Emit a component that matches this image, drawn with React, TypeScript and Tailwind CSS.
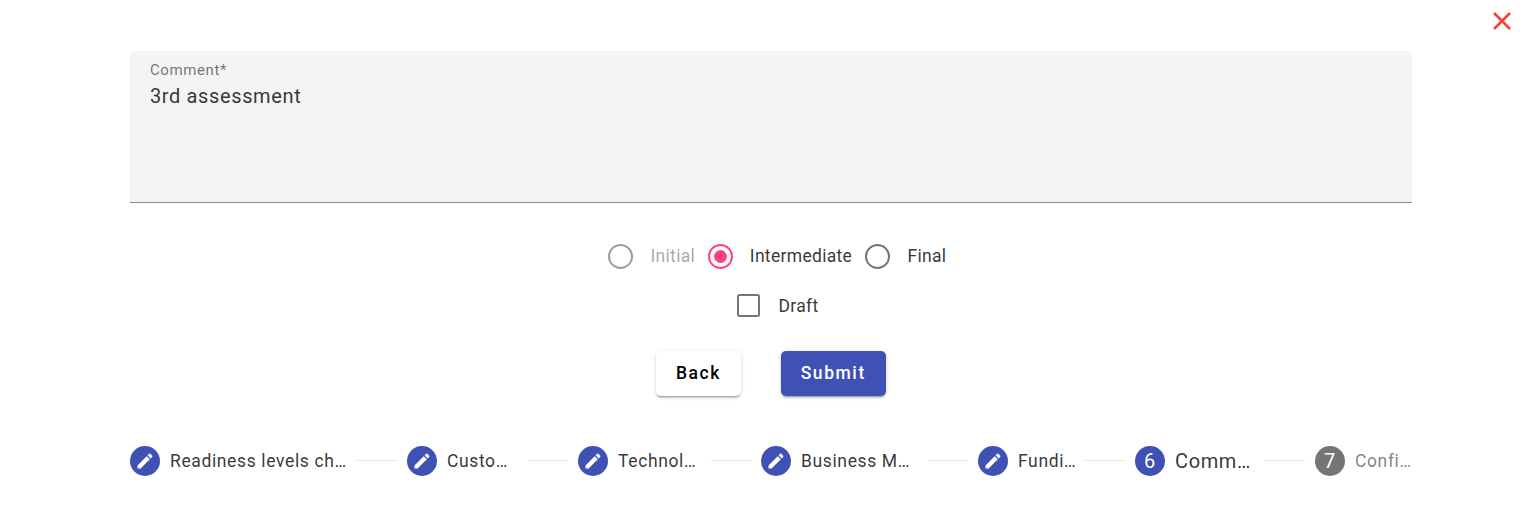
import { ReactNode } from "react";

type Step = { label: string; width: string; state: "done" | "active" | "idle" };

const steps: Step[] = [
  { label: "Readiness levels ch…", width: "w-[217px]", state: "done" },
  { label: "Custo…", width: "w-[111px]", state: "done" },
  { label: "Technol…", width: "w-[123px]", state: "done" },
  { label: "Business M…", width: "w-[157px]", state: "done" },
  { label: "Fundi…", width: "w-[97px]", state: "done" },
  { label: "Comm…", width: "w-[120px]", state: "active" },
  { label: "Confi…", width: "w-[97px]", state: "idle" },
];

const labelStyles = {
  done: "text-[17.5px] tracking-[0.625px] text-black/80",
  active: "text-[20px] tracking-[0.625px] text-black/80",
  idle: "text-[17.5px] tracking-[0.625px] text-black/50",
};

function Pencil() {
  return (
    <svg viewBox="0 0 24 24" className="size-5" fill="currentColor">
      <path d="M3 17.25V21h3.75L17.81 9.94l-3.75-3.75L3 17.25zM20.71 7.04c.39-.39.39-1.02 0-1.41l-2.34-2.34c-.39-.39-1.02-.39-1.41 0l-1.83 1.83 3.75 3.75 1.83-1.83z" />
    </svg>
  );
}

function Radio({ children, checked, disabled }: { children: ReactNode; checked?: boolean; disabled?: boolean }) {
  const color = checked ? "border-[#ff4081]" : disabled ? "border-[#9e9e9e]" : "border-[#757575]";
  return (
    <label className="flex items-center">
      <span className={`flex size-[25px] items-center justify-center rounded-full border-[2px] ${color}`}>
        {checked && <span className="size-[13px] rounded-full bg-[#ff4081]" />}
      </span>
      <span className={`${checked ? "ml-[17px]" : "ml-[17.5px]"} ${disabled ? "text-black/36" : "text-black/80"}`}>{children}</span>
    </label>
  );
}

export default function App() {
  return (
    <div className="h-[528px] w-full bg-white font-['Roboto',sans-serif] text-[17.5px] leading-[25px]">
      <div className="flex h-[51px] justify-end pt-[11px] pr-4">
        <button className="size-5 text-[#f44336]" aria-label="Close">
          <svg viewBox="0 0 20 20" className="size-5" fill="none" stroke="currentColor" strokeWidth="2.6">
            <path d="M2 2L18 18M18 2L2 18" />
          </svg>
        </button>
      </div>
      <main className="ml-[130px] w-[1282px]">
        <div className="h-[152px] rounded-t-[5px] border-b border-[#8c8c8c] bg-[#f4f4f4] px-5 pt-[10px]">
          <div className="h-[20px] text-[15px] leading-[18px] tracking-[0.59px] text-black/55">Comment*</div>
          <div className="text-[20px] leading-[30px] tracking-[0.625px] text-black/80">3rd assessment</div>
        </div>
        <div className="mt-[41px] ml-[478px] flex h-[25px] items-center gap-[12.7px] tracking-[0.3125px]">
          <Radio disabled>Initial</Radio>
          <Radio checked>Intermediate</Radio>
          <Radio>Final</Radio>
        </div>
        <label className="mt-[24px] ml-[607px] flex h-[25px] items-start tracking-[0.3125px] text-black/80">
          <span className="mt-px size-[23px] rounded-[2.5px] border-[2px] border-[#757575]" />
          <span className="ml-[18.5px] pt-px">Draft</span>
        </label>
        <div className="mt-[33px] ml-[526px] flex gap-10 font-medium tracking-[1.5625px]">
          <button className="h-[45px] w-[85px] rounded-[5px] bg-white text-black shadow-[0_3px_1px_-2px_rgba(0,0,0,0.2),0_2px_2px_0_rgba(0,0,0,0.14),0_1px_5px_0_rgba(0,0,0,0.12)]">Back</button>
          <button className="h-[45px] w-[105px] rounded-[5px] bg-[#3f51b5] pr-[0.5px] text-white shadow-[0_3px_1px_-2px_rgba(0,0,0,0.2),0_2px_2px_0_rgba(0,0,0,0.14),0_1px_5px_0_rgba(0,0,0,0.12)]">Submit</button>
        </div>
        <ol className="mt-[50px] flex h-[30px] items-center">
          {steps.map((step, i) => (
            <li key={step.label} className="flex items-center">
              {i > 0 && <span className="mx-[10px] mb-px h-px w-10 bg-black/12" />}
              <span className={`flex items-center gap-[10px] whitespace-nowrap ${step.width}`}>
                <span className={`flex size-[30px] shrink-0 items-center justify-center rounded-full text-[20px] text-white ${step.state === "idle" ? "bg-[#757575]" : "bg-[#3f51b5]"}`}>
                  {step.state === "done" ? <Pencil /> : <span className="pr-px">{i + 1}</span>}
                </span>
                <span className={labelStyles[step.state]}>{step.label}</span>
              </span>
            </li>
          ))}
        </ol>
      </main>
    </div>
  );
}
